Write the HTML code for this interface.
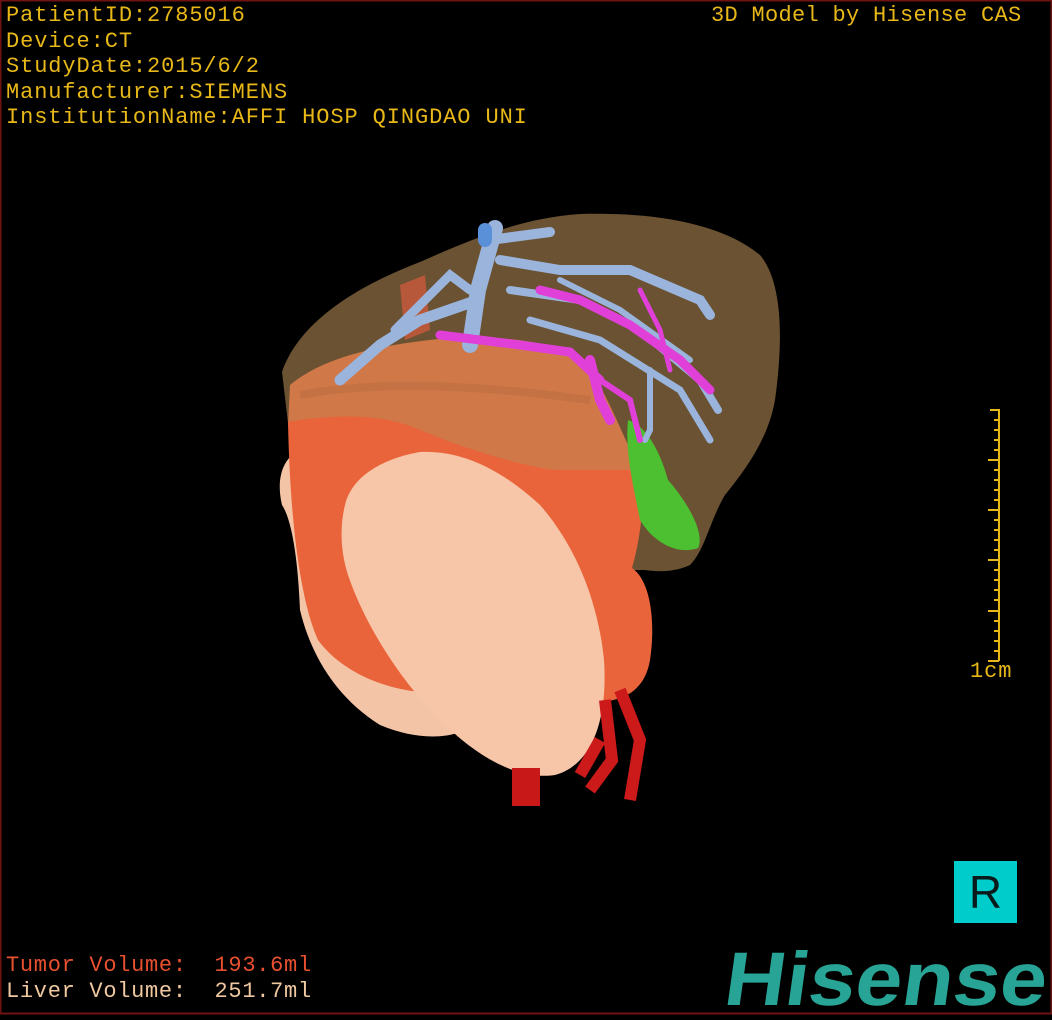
<!DOCTYPE html>
<html><head><meta charset="utf-8"><style>
html,body{margin:0;padding:0;background:#000;}
body{width:1052px;height:1020px;position:relative;overflow:hidden;}
.t{position:absolute;font-family:"Liberation Mono",monospace;font-size:22px;letter-spacing:0.9px;white-space:pre;line-height:25.5px;}
</style></head><body>
<svg width="1052" height="1020" style="position:absolute;left:0;top:0">
<rect x="0.5" y="0.5" width="1051" height="1013" fill="none" stroke="#6e1212" stroke-width="2"/>
<path d="M282,372 C300,320 360,285 420,262 C470,240 520,218 580,214 C650,212 720,222 760,255 C785,285 782,350 775,400 C768,440 745,470 725,495 C710,520 705,550 690,565 C675,572 660,572 645,570 L600,570 L420,470 L290,440 Z" fill="#6a5232"/>
<path d="M400,285 L425,275 L430,330 L405,340 Z" fill="#b8583a"/>
<path d="M290,385 C320,360 370,345 450,338 C520,335 570,345 590,370 C610,400 620,430 640,470 C645,500 640,540 632,565 L560,565 L460,470 L350,470 L288,425 Z" fill="#d07848"/>
<path d="M300,395 C380,380 480,385 590,400" stroke="#b86a40" stroke-width="8" fill="none" opacity=".5"/>
<path d="M300,450 C282,458 276,480 282,505 C292,520 298,560 300,610 C312,660 340,700 380,725 C420,742 460,740 480,720 L470,600 Z" fill="#f4c4a6"/>
<path d="M288,422 C330,415 380,412 420,430 C480,455 540,470 560,470 L640,470 C646,500 640,540 632,568 C650,580 656,620 650,660 C645,690 625,700 600,702 L420,692 C380,688 340,670 318,640 C300,600 290,520 288,422 Z" fill="#e9643a"/>
<path d="M345,505 C352,475 385,458 420,452 C460,450 500,468 540,505 C575,545 598,600 604,660 C608,720 592,765 555,775 C520,780 480,760 440,720 C400,680 365,625 348,575 C340,550 340,525 345,505 Z" fill="#f7c6a8"/>
<rect x="512" y="768" width="28" height="38" fill="#c81818"/>
<path d="M620,690 L640,740 L630,800 M605,700 L612,760 L590,790 M600,740 L580,775" stroke="#cc1a1a" stroke-width="12" fill="none"/>
<path d="M628,420 C645,425 660,450 668,480 C690,505 705,535 698,548 C680,555 655,545 640,520 C632,480 625,450 628,420 Z" fill="#4cc030"/>
<g stroke="#9ab4dc" stroke-linecap="round" fill="none">
<path d="M495,228 L478,290 L470,345" stroke-width="16"/>
<path d="M478,300 L420,320 L380,345 L340,380" stroke-width="11"/>
<path d="M470,290 L450,275 L395,330" stroke-width="9"/>
<path d="M490,240 L550,232" stroke-width="10"/>
<path d="M500,260 L560,270 L630,270 L700,300 L710,315" stroke-width="10"/>
<path d="M510,290 L580,300 L640,330 L700,380 L718,410" stroke-width="8"/>
<path d="M530,320 L600,340 L680,390 L710,440" stroke-width="7"/>
<path d="M560,280 L620,310 L690,360" stroke-width="6"/>
<path d="M650,370 L650,430 L645,440" stroke-width="6"/>
<path d="M485,230 L485,240" stroke="#5a90d8" stroke-width="14"/>
</g>
<g stroke="#e040d8" stroke-linecap="round" fill="none">
<path d="M540,290 L580,300 L630,325 L680,360 L710,390" stroke-width="9"/>
<path d="M440,335 L520,345 L570,352 L600,380" stroke-width="9"/>
<path d="M590,360 L600,400 L610,420" stroke-width="10"/>
<path d="M600,380 L630,400 L640,440" stroke-width="6"/>
<path d="M640,290 L660,330 L670,370" stroke-width="5"/>
</g>
<g stroke="#e8b818" stroke-width="2">
<path d="M999,409 V661"/>
<path d="M990,410 H999 M994,420 H999 M994,430 H999 M994,440 H999 M994,450 H999 M988,460 H999 M994,470 H999 M994,480 H999 M994,490 H999 M994,500 H999 M988,510 H999 M994,520 H999 M994,530 H999 M994,540 H999 M994,550 H999 M988,560 H999 M994,570 H999 M994,580 H999 M994,590 H999 M994,600 H999 M988,611 H999 M994,621 H999 M994,631 H999 M994,641 H999 M994,651 H999 M988,661 H999"/>
</g>
<rect x="954" y="861" width="63" height="62" fill="#00cccc"/>
<text x="985.5" y="908" text-anchor="middle" font-family="Liberation Sans,sans-serif" font-size="46" fill="#0a1a1a">R</text>
<text x="0" y="0" transform="translate(722,1005) skewX(-8)" font-family="Liberation Sans,sans-serif" font-weight="bold" font-size="76" textLength="322" lengthAdjust="spacingAndGlyphs" fill="#27a495">Hisense</text>
</svg>
<div class="t" style="left:6px;top:3px;color:#e8b818">PatientID:2785016
Device:CT
StudyDate:2015/6/2
Manufacturer:SIEMENS
InstitutionName:AFFI HOSP QINGDAO UNI</div>
<div class="t" style="left:711px;top:3px;color:#e8b818;letter-spacing:0.3px">3D Model by Hisense CAS</div>
<div class="t" style="left:970px;top:659px;color:#e8b818">1cm</div>
<div class="t" style="left:6px;top:953px;color:#e85030;letter-spacing:0.7px">Tumor Volume:  193.6ml</div>
<div class="t" style="left:6px;top:979px;color:#f0c8a0;letter-spacing:0.7px">Liver Volume:  251.7ml</div>
</body></html>
